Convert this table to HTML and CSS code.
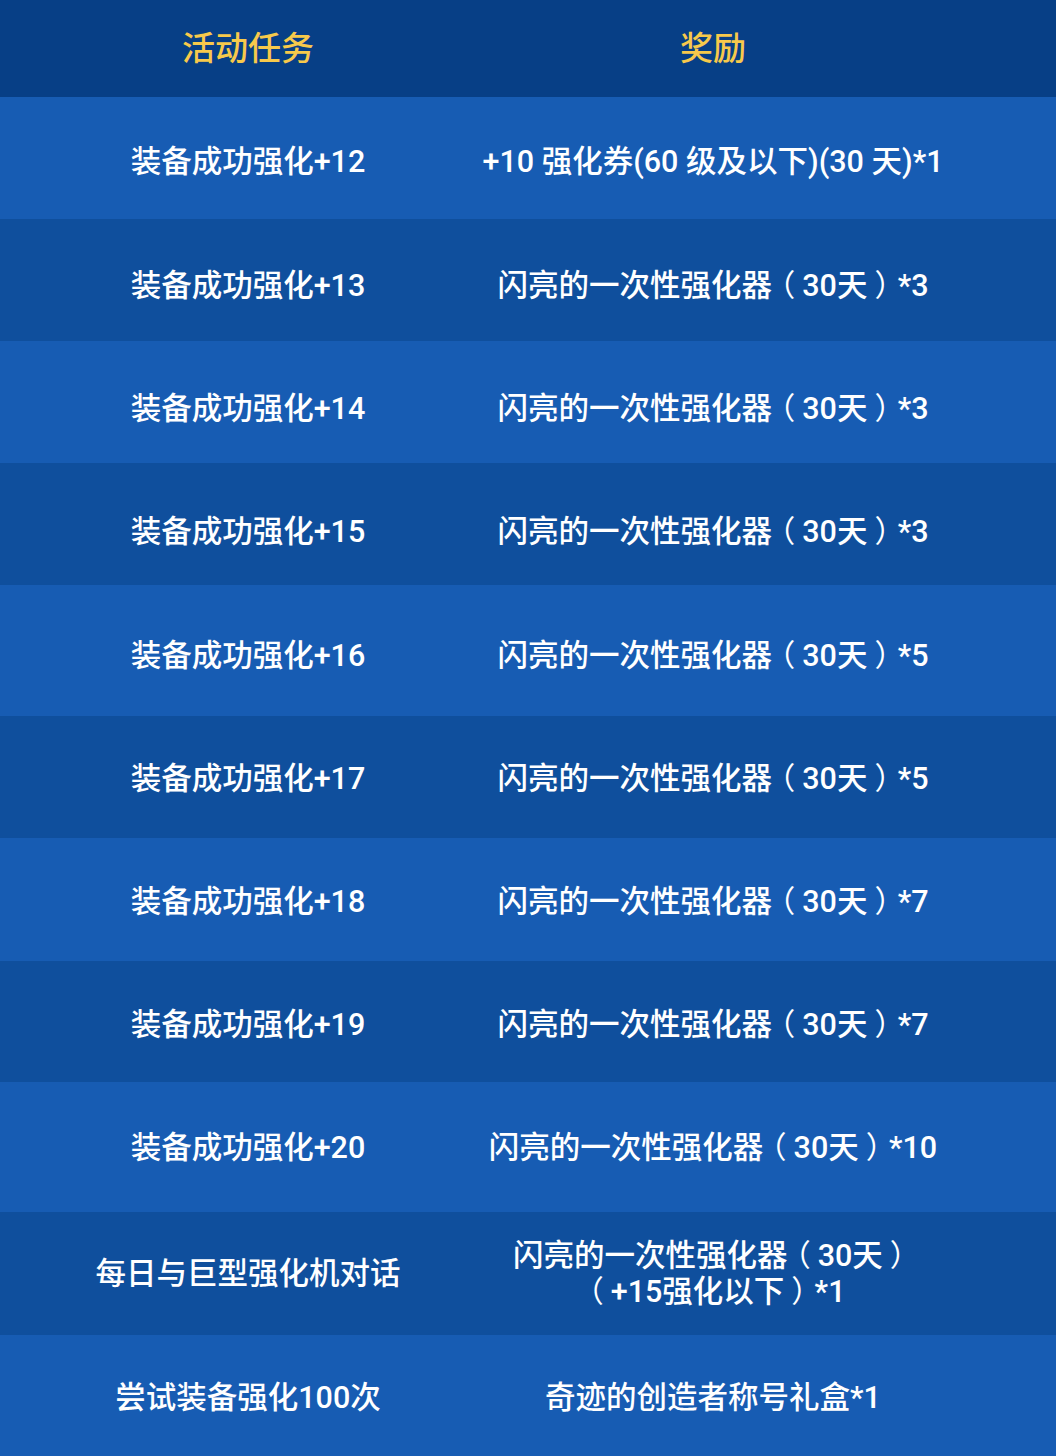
FILE: index.html
```html
<!DOCTYPE html>
<html lang="zh-CN">
<head>
<meta charset="utf-8">
<title>活动任务</title>
<link rel="stylesheet" href="styles.css">
</head>
<body>
<div class="table">
  <div class="row head"><div class="cell"><span class="txt">活动任务</span></div><div class="cell"><span class="txt">奖励</span></div></div>
  <div class="row light h122 p8"><div class="cell"><span class="txt">装备成功强化+12</span></div><div class="cell"><span class="txt">+10 强化券(60 级及以下)(30 天)*1</span></div></div>
  <div class="row dark h122 p12"><div class="cell"><span class="txt">装备成功强化+13</span></div><div class="cell"><span class="txt">闪亮的一次性强化器<span class="lp">（</span>30天<span class="rp">）</span>*3</span></div></div>
  <div class="row light h122 p14"><div class="cell"><span class="txt">装备成功强化+14</span></div><div class="cell"><span class="txt">闪亮的一次性强化器<span class="lp">（</span>30天<span class="rp">）</span>*3</span></div></div>
  <div class="row dark h122 p16"><div class="cell"><span class="txt">装备成功强化+15</span></div><div class="cell"><span class="txt">闪亮的一次性强化器<span class="lp">（</span>30天<span class="rp">）</span>*3</span></div></div>
  <div class="row light h131 p10"><div class="cell"><span class="txt">装备成功强化+16</span></div><div class="cell"><span class="txt">闪亮的一次性强化器<span class="lp">（</span>30天<span class="rp">）</span>*5</span></div></div>
  <div class="row dark h122 p4"><div class="cell"><span class="txt">装备成功强化+17</span></div><div class="cell"><span class="txt">闪亮的一次性强化器<span class="lp">（</span>30天<span class="rp">）</span>*5</span></div></div>
  <div class="row light h123 p4"><div class="cell"><span class="txt">装备成功强化+18</span></div><div class="cell"><span class="txt">闪亮的一次性强化器<span class="lp">（</span>30天<span class="rp">）</span>*7</span></div></div>
  <div class="row dark h121 p6"><div class="cell"><span class="txt">装备成功强化+19</span></div><div class="cell"><span class="txt">闪亮的一次性强化器<span class="lp">（</span>30天<span class="rp">）</span>*7</span></div></div>
  <div class="row light h130 p2"><div class="cell"><span class="txt">装备成功强化+20</span></div><div class="cell"><span class="txt">闪亮的一次性强化器<span class="lp">（</span>30天<span class="rp">）</span>*10</span></div></div>
  <div class="row dark h123"><div class="cell"><span class="txt">每日与巨型强化机对话</span></div><div class="cell"><span class="txt">闪亮的一次性强化器<span class="lp">（</span>30天<span class="rp">）</span><br><span class="lp">（</span>+15强化以下<span class="rp">）</span>*1</span></div></div>
  <div class="row light h121 p4"><div class="cell"><span class="txt">尝试装备强化100次</span></div><div class="cell"><span class="txt">奇迹的创造者称号礼盒*1</span></div></div>
</div>
</body>
</html>
```

FILE: styles.css
```css
html, body {
  margin: 0;
  padding: 0;
  background: #175cb3;
}
.table {
  width: 1056px;
  display: flex;
  flex-direction: column;
  font-family: "Roboto", "Noto Sans CJK SC", sans-serif;
  color: #ffffff;
  font-size: 30.5px;
  font-weight: 500;
}
.row {
  box-sizing: border-box;
  display: grid;
  grid-template-columns: 496px 434px 1fr;
  align-items: center;
}
.cell {
  display: flex;
  justify-content: center;
  line-height: 36px;
  white-space: nowrap;
}
.txt {
  display: block;
  text-align: center;
}
.lp, .rp {
  font-feature-settings: "halt" 1;
  font-weight: 400;
}
.lp {
  margin-left: 8px;
  margin-right: 7px;
}
.rp {
  margin-left: 7px;
  margin-right: 8px;
}
.head {
  height: 97px;
  background: #073f86;
  color: #f7c94b;
  font-size: 33px;
}
.light { background: #175cb3; }
.dark { background: #0f4f9d; }
.h121 { height: 121px; }
.h122 { height: 122px; }
.h123 { height: 123px; }
.h130 { height: 130px; }
.h131 { height: 131px; }
.p2 { padding-top: 2px; }
.p4 { padding-top: 4px; }
.p6 { padding-top: 6px; }
.p8 { padding-top: 8px; }
.p10 { padding-top: 10px; }
.p12 { padding-top: 12px; }
.p14 { padding-top: 14px; }
.p16 { padding-top: 16px; }
```
